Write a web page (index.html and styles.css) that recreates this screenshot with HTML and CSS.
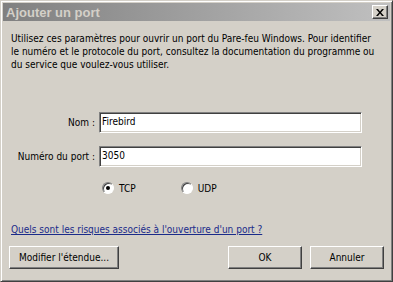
FILE: index.html
```html
<!DOCTYPE html>
<html lang="fr">
<head>
  <meta charset="UTF-8">
  <title>Ajouter un port</title>
  <link rel="stylesheet" href="styles.css">
</head>
<body>
  <div class="window">
    <div class="titlebar">
      <span class="title">Ajouter un port</span>
      <span class="close">
        <svg width="8" height="7" viewBox="0 0 8 7"><path d="M0 0h2l2 2.5 2-2.5h2l-3 3.5 3 3.5h-2l-2-2.5-2 2.5h-2l3-3.5z" fill="#000"/></svg>
      </span>
    </div>
    <div class="content">
      <p class="intro">Utilisez ces paramètres pour ouvrir un port du Pare-feu Windows. Pour identifier<br>le numéro et le protocole du port, consultez la documentation du programme ou<br>du service que voulez-vous utiliser.</p>
      <div class="fields">
        <label class="lbl">Nom :</label>
        <div class="input">Firebird</div>
        <label class="lbl">Numéro du port :</label>
        <div class="input">3050</div>
        <span></span>
        <div class="radios">
          <span class="radio"><span class="dot checked"></span>TCP</span>
          <span class="radio"><span class="dot"></span>UDP</span>
        </div>
      </div>
      <a class="link" href="#">Quels sont les risques associés à l'ouverture d'un port ?</a>
      <div class="buttons">
        <button class="btn wide">Modifier l'étendue...</button>
        <span class="spacer"></span>
        <button class="btn">OK</button>
        <button class="btn">Annuler</button>
      </div>
    </div>
  </div>
</body>
</html>
```

FILE: styles.css
```css
body {
  margin: 0;
  background: #fff;
  font-family: "DejaVu Sans Condensed", "DejaVu Sans", sans-serif;
  font-stretch: condensed;
  font-size: 10px;
  color: #000;
}
.window {
  width: 393px;
  height: 282px;
  box-sizing: border-box;
  background: #d4d0c8;
  border: 1px solid;
  border-color: #d4d0c8 #404040 #404040 #d4d0c8;
  box-shadow: inset 1px 1px #fff, inset -1px -1px #808080;
  padding: 2px;
  display: flex;
  flex-direction: column;
}
.titlebar {
  height: 18px;
  background: linear-gradient(to right, #808080, #c0c0c0);
  display: flex;
  align-items: center;
  justify-content: space-between;
  padding: 0 2px 0 3px;
}
.title {
  font-family: "Liberation Sans", Arial, sans-serif;
  font-weight: bold;
  font-size: 13px;
  color: #d4d0c8;
}
.close {
  width: 16px;
  height: 14px;
  box-sizing: border-box;
  background: #d4d0c8;
  border: 1px solid;
  border-color: #fff #404040 #404040 #fff;
  box-shadow: inset -1px -1px #808080;
  display: flex;
  align-items: center;
  justify-content: center;
}
.content {
  flex: 1;
  padding: 11px 6px 0 8px;
  display: flex;
  flex-direction: column;
}
.intro {
  margin: 0;
  line-height: 13px;
  white-space: nowrap;
}
.fields {
  margin-top: 41px;
  display: grid;
  grid-template-columns: 84px 1fr;
  column-gap: 4px;
  row-gap: 13px;
  align-items: center;
  padding-right: 22px;
}
.lbl {
  text-align: right;
}
.input {
  height: 21px;
  box-sizing: border-box;
  background: #fff;
  border: 1px solid;
  border-color: #808080 #fff #fff #808080;
  box-shadow: inset 1px 1px #404040, inset -1px -1px #d4d0c8;
  padding: 3px 2px 0;
}
.radios {
  margin-top: 2px;
  padding-left: 3px;
  display: flex;
  gap: 45px;
}
.radio {
  display: flex;
  align-items: center;
  gap: 5px;
}
.dot {
  width: 12px;
  height: 12px;
  box-sizing: border-box;
  border-radius: 50%;
  background: #fff;
  border: 1px solid;
  border-color: #808080 #fff #fff #808080;
  box-shadow: inset 1px 1px #404040;
  position: relative;
}
.dot.checked::after {
  content: "";
  position: absolute;
  left: 3px;
  top: 3px;
  width: 4px;
  height: 4px;
  border-radius: 50%;
  background: #000;
}
.link {
  margin-top: 30px;
  color: #1a2b8a;
  text-decoration: underline;
  align-self: flex-start;
}
.buttons {
  margin: 11px 0 0 -2px;
  display: flex;
  gap: 8px;
}
.spacer {
  flex: 1;
}
.btn {
  height: 23px;
  width: 74px;
  box-sizing: border-box;
  font-family: inherit;
  font-stretch: inherit;
  font-size: 10px;
  color: #000;
  background: #d4d0c8;
  border: 1px solid;
  border-color: #fff #404040 #404040 #fff;
  box-shadow: inset -1px -1px #808080;
  padding: 0;
}
.btn.wide {
  width: 110px;
}
```
